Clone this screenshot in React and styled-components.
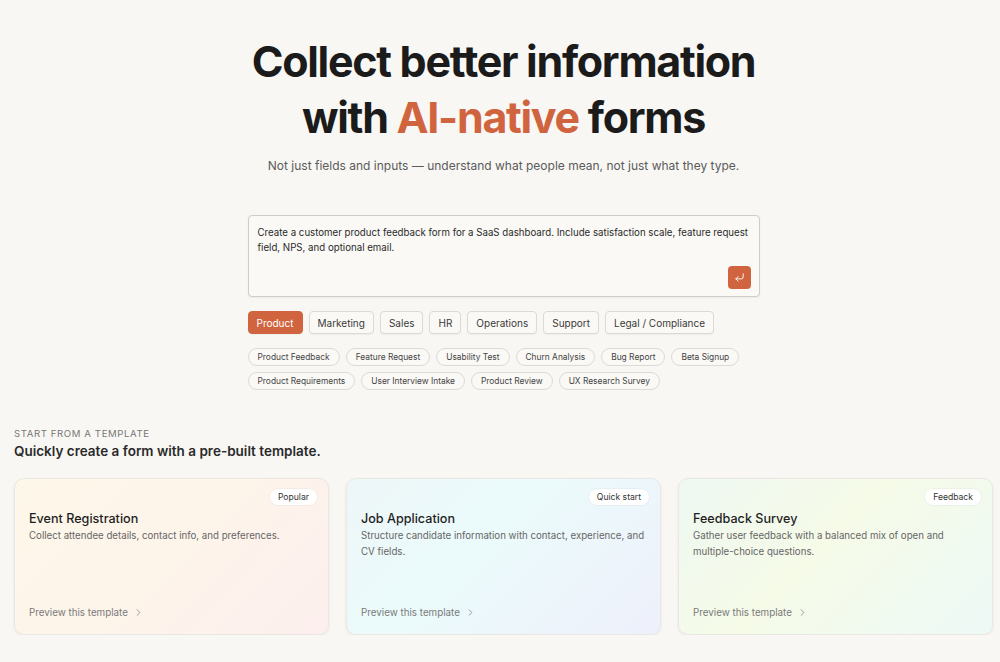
import React from 'react';
import styled, { createGlobalStyle } from 'styled-components';
import { CornerDownLeft, ChevronRight } from 'lucide-react';

const GlobalStyle = createGlobalStyle`
  html, body {
    margin: 0;
    padding: 0;
    background: #f8f7f4;
    font-family: Inter, 'Noto Sans', sans-serif;
    color: #1c1c1c;
  }
  * { box-sizing: border-box; }
`;

const Page = styled.div`
  width: 1000px;
  padding: 33px 7px 0 14px;
`;

const Hero = styled.div`
  display: flex;
  flex-direction: column;
  align-items: center;
`;

const Title = styled.h1`
  margin: 0;
  font-size: 43px;
  line-height: 56px;
  font-weight: 700;
  letter-spacing: -1.3px;
  text-align: center;
  color: #1b1b1b;
  span {
    color: #d0643f;
  }
`;

const Subtitle = styled.p`
  margin: 13px 0 0;
  font-size: 12px;
  color: #5b5b5b;
`;

const Prompt = styled.div`
  margin-top: 42px;
  width: 512px;
  height: 82px;
  border: 1px solid #cfcdc9;
  border-radius: 4px;
  background: #faf9f6;
  box-shadow: 0 1px 2px rgba(0, 0, 0, 0.05);
  padding: 9px 8px 7px 9px;
  display: flex;
  flex-direction: column;
  justify-content: space-between;
`;

const PromptText = styled.div`
  font-size: 9.7px;
  line-height: 15px;
  color: #2a2a2a;
`;

const Send = styled.button`
  align-self: flex-end;
  width: 23px;
  height: 23px;
  border: none;
  border-radius: 4px;
  background: #d0643f;
  color: #fff;
  display: flex;
  align-items: center;
  justify-content: center;
  padding: 0;
`;

const Controls = styled.div`
  width: 512px;
  margin-top: 14px;
  display: flex;
  flex-direction: column;
  gap: 14px;
`;

const Row = styled.div`
  display: flex;
  flex-wrap: wrap;
  gap: ${(p) => p.gap || 6}px;
`;

const Category = styled.button`
  height: 23px;
  padding: 0 8px;
  border-radius: 4px;
  font-family: inherit;
  font-size: 10px;
  border: 1px solid ${(p) => (p.active ? '#d0643f' : '#dcdad6')};
  background: ${(p) => (p.active ? '#d0643f' : '#faf9f6')};
  color: ${(p) => (p.active ? '#fff' : '#3a3a3a')};
  box-shadow: 0 1px 1px rgba(0, 0, 0, 0.04);
`;

const Chips = styled.div`
  display: flex;
  flex-direction: column;
  gap: 6px;
`;

const Chip = styled.button`
  height: 18px;
  padding: 0 9px;
  border-radius: 9px;
  font-family: inherit;
  font-size: 8.4px;
  border: 1px solid #dcdad6;
  background: #faf9f6;
  color: #444;
`;

const Section = styled.section`
  margin-top: 38px;
`;

const Eyebrow = styled.div`
  font-size: 9.6px;
  letter-spacing: 0.6px;
  color: #777;
  text-transform: uppercase;
`;

const SectionTitle = styled.h2`
  margin: 4px 0 0;
  font-size: 13.5px;
  font-weight: 600;
  color: #2a2a2a;
`;

const Cards = styled.div`
  margin-top: 19px;
  display: grid;
  grid-template-columns: repeat(3, 315px);
  gap: 17px;
`;

const Card = styled.div`
  height: 157px;
  border-radius: 10px;
  border: 1px solid #ebe8e3;
  background: ${(p) => p.bg};
  box-shadow: 0 1px 3px rgba(0, 0, 0, 0.07);
  padding: 10px 11px 16px 14px;
  display: flex;
  flex-direction: column;
`;

const Badge = styled.span`
  align-self: flex-end;
  height: 16px;
  line-height: 16px;
  padding: 0 8px;
  border-radius: 8px;
  background: #fff;
  font-size: 8.6px;
  color: #333;
  box-shadow: 0 0 0 1px rgba(0, 0, 0, 0.03);
`;

const CardTitle = styled.h3`
  margin: 6px 0 0;
  font-size: 12.6px;
  font-weight: 500;
  color: #1f1f1f;
`;

const CardDesc = styled.p`
  margin: 2px 0 0;
  font-size: 9.7px;
  line-height: 16px;
  color: #666;
  max-width: 290px;
`;

const Preview = styled.a`
  margin-top: auto;
  display: flex;
  align-items: center;
  gap: 5px;
  font-size: 9.8px;
  color: #7a7a7a;
`;

const categories = ['Product', 'Marketing', 'Sales', 'HR', 'Operations', 'Support', 'Legal / Compliance'];
const chipRows = [
  ['Product Feedback', 'Feature Request', 'Usability Test', 'Churn Analysis', 'Bug Report', 'Beta Signup'],
  ['Product Requirements', 'User Interview Intake', 'Product Review', 'UX Research Survey'],
];

const templates = [
  {
    badge: 'Popular',
    title: 'Event Registration',
    desc: 'Collect attendee details, contact info, and preferences.',
    bg: 'linear-gradient(135deg, #fdf7e9 0%, #fdf4ea 50%, #fcefee 100%)',
  },
  {
    badge: 'Quick start',
    title: 'Job Application',
    desc: 'Structure candidate information with contact, experience, and CV fields.',
    bg: 'linear-gradient(135deg, #eef6f8 0%, #ebfbfb 40%, #eef0fb 100%)',
  },
  {
    badge: 'Feedback',
    title: 'Feedback Survey',
    desc: 'Gather user feedback with a balanced mix of open and multiple-choice questions.',
    bg: 'linear-gradient(135deg, #eef8f2 0%, #f6fbe8 45%, #edf9f7 100%)',
  },
];

export default function App() {
  return (
    <>
      <GlobalStyle />
      <Page>
        <Hero>
          <Title>
            Collect better information
            <br />
            with <span>AI-native</span> forms
          </Title>
          <Subtitle>
            Not just fields and inputs — understand what people mean, not just what they type.
          </Subtitle>
          <Prompt>
            <PromptText>
              Create a customer product feedback form for a SaaS dashboard. Include satisfaction scale, feature
              request field, NPS, and optional email.
            </PromptText>
            <Send aria-label="Submit">
              <CornerDownLeft size={11} strokeWidth={2} />
            </Send>
          </Prompt>
          <Controls>
            <Row gap={6}>
              {categories.map((c, i) => (
                <Category key={c} active={i === 0}>
                  {c}
                </Category>
              ))}
            </Row>
            <Chips>
              {chipRows.map((row, i) => (
                <Row key={i} gap={6}>
                  {row.map((c) => (
                    <Chip key={c}>{c}</Chip>
                  ))}
                </Row>
              ))}
            </Chips>
          </Controls>
        </Hero>
        <Section>
          <Eyebrow>Start from a template</Eyebrow>
          <SectionTitle>Quickly create a form with a pre-built template.</SectionTitle>
          <Cards>
            {templates.map((t) => (
              <Card key={t.title} bg={t.bg}>
                <Badge>{t.badge}</Badge>
                <CardTitle>{t.title}</CardTitle>
                <CardDesc>{t.desc}</CardDesc>
                <Preview>
                  Preview this template <ChevronRight size={11} strokeWidth={1.6} />
                </Preview>
              </Card>
            ))}
          </Cards>
        </Section>
      </Page>
    </>
  );
}
